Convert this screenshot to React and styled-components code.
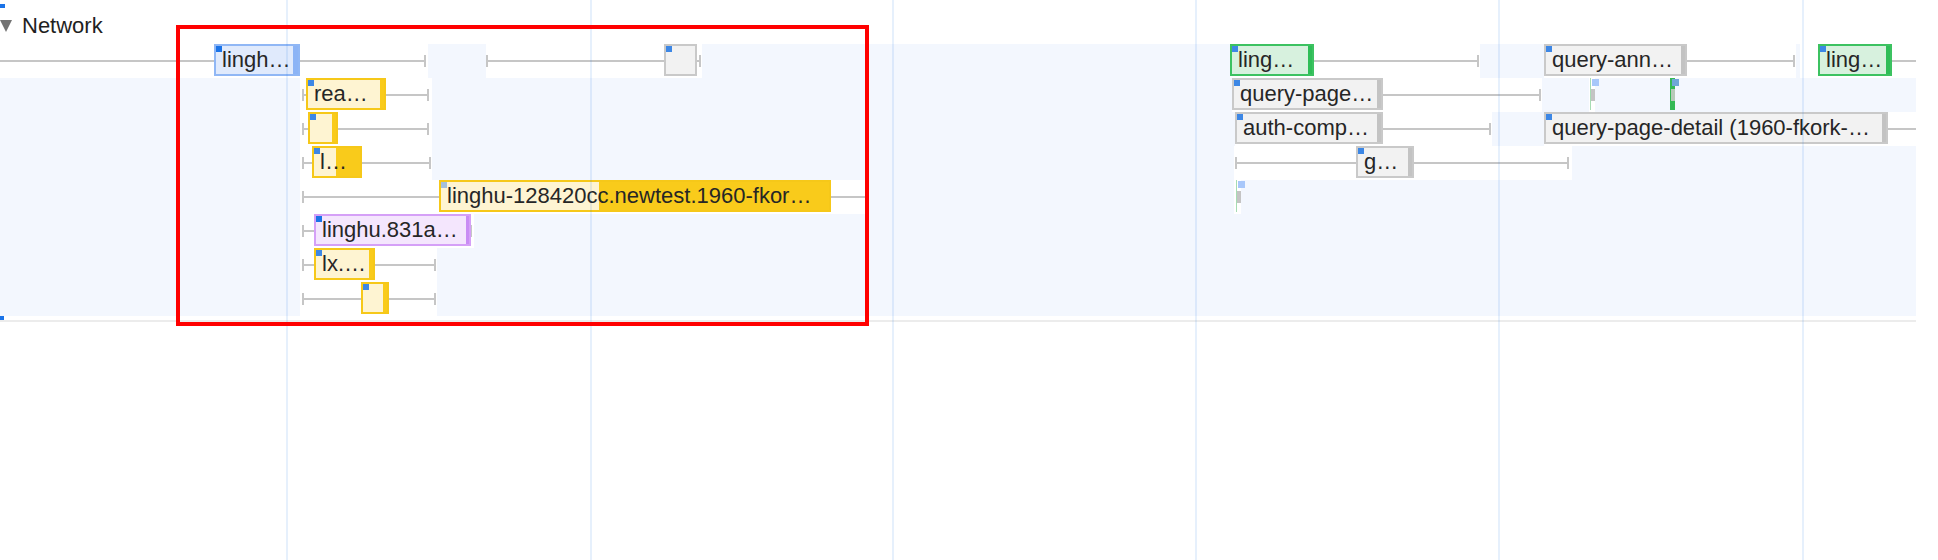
import React from 'react';
import styled, { createGlobalStyle } from 'styled-components';

const GlobalStyle = createGlobalStyle`
  html, body {
    margin: 0;
    padding: 0;
    background: #fff;
    overflow: hidden;
  }
`;

const Page = styled.div`
  position: relative;
  width: 1938px;
  height: 560px;
  overflow: hidden;
  background: #fff;
  font-family: "Liberation Sans", Arial, sans-serif;
`;

const Header = styled.div`
  height: 44px;
  box-sizing: border-box;
  padding-top: 4px;
`;

const PrevMarker = styled.div`
  width: 5px;
  height: 4px;
  background: #1a73e8;
`;

const TitleRow = styled.div`
  display: flex;
  align-items: center;
  gap: 10px;
  height: 26px;
  margin-top: 5px;
`;

const Caret = styled.span`
  width: 0;
  height: 0;
  border-left: 6.5px solid transparent;
  border-right: 6.5px solid transparent;
  border-top: 12px solid #737373;
`;

const Title = styled.span`
  font-size: 22px;
  line-height: 26px;
  color: #1f1f1f;
`;

const Track = styled.div`
  width: 1916px;
  background: #f3f7fe;
  display: flex;
  flex-direction: column;
`;

// one lane of the timeline: entries sit at their time offsets
const Lane = styled.div`
  position: relative;
  height: 34px;
`;

const Span = styled.div`
  position: absolute;
  top: 0;
  height: 34px;
  background: #fff;
`;

const Whisker = styled.div`
  position: absolute;
  top: 11px;
  height: 12px;
  box-sizing: border-box;
  border-left: ${p => (p.$capL ? '2px solid #c6c6c6' : 'none')};
  border-right: ${p => (p.$capR ? '2px solid #c6c6c6' : 'none')};

  &::before {
    content: '';
    position: absolute;
    left: 0;
    right: 0;
    top: 5px;
    height: 2px;
    background: #c6c6c6;
  }
`;

const kinds = {
  blue: { bg: '#e0eafc', border: '#90b7f5', solid: '#8cb4f6' },
  gray: { bg: '#f2f2f2', border: '#c9c9c9', solid: '#c3c3c3' },
  yellow: { bg: '#fef4d2', border: '#f6c819', solid: '#f9cb1b' },
  green: { bg: '#d7f1de', border: '#3cc261', solid: '#2fbd57' },
  purple: { bg: '#f4e6fd', border: '#d5a0f7', solid: '#c98cf4' },
};

const Bar = styled.div`
  position: absolute;
  top: 0;
  height: 32px;
  box-sizing: border-box;
  border: 2px solid ${p => kinds[p.$kind].border};
  background: linear-gradient(
    to left,
    ${p => kinds[p.$kind].solid} 0,
    ${p => kinds[p.$kind].solid} ${p => p.$solid}px,
    ${p => kinds[p.$kind].bg} ${p => p.$solid}px
  );
  padding: 0 4px 0 6px;
  font-size: 22px;
  line-height: 28px;
  color: #262626;
  white-space: nowrap;
  overflow: hidden;
`;

const Dot = styled.span`
  position: absolute;
  left: -1px;
  top: -1px;
  width: 7px;
  height: 7px;
  background: ${p => p.$color};
`;

const Tick = styled.div`
  position: absolute;
  top: 0;
  height: 32px;
  width: 5px;
  background: ${p => (p.$strong ? '#34b955' : '#fff')};
  border-left: 1px solid ${p => (p.$strong ? '#34b955' : '#a6dcb3')};
  box-sizing: border-box;

  &::before {
    content: '';
    position: absolute;
    left: 1px;
    top: 1px;
    width: 7px;
    height: 7px;
    background: ${p => (p.$strong ? '#6fa7d8' : '#a8c7fa')};
  }

  &::after {
    content: '';
    position: absolute;
    left: 0;
    top: 11px;
    width: 4px;
    height: 12px;
    background: ${p => (p.$strong ? '#b7c9b9' : '#c4c4c4')};
  }
`;

const Footer = styled.div`
  position: relative;
  width: 1916px;
  height: 4px;
  border-bottom: 2px solid #ececec;

  &::before {
    content: '';
    position: absolute;
    left: 0;
    top: 0;
    width: 4px;
    height: 4px;
    background: #1a73e8;
  }
`;

const Grid = styled.div`
  position: absolute;
  inset: 0;
  pointer-events: none;
`;

const GridLine = styled.div`
  position: absolute;
  top: 0;
  bottom: 0;
  width: 2px;
  background: rgba(26, 115, 232, 0.11);
`;

const Watermarks = styled.div`
  position: absolute;
  inset: 0;
  pointer-events: none;
`;

const Mark = styled.div`
  position: absolute;
  transform: rotate(-45deg);
  transform-origin: 0 0;
  font-size: 28px;
  line-height: 38px;
  white-space: pre;
  color: rgba(0, 0, 0, 0.022);
`;

const Highlight = styled.div`
  position: absolute;
  left: 176px;
  top: 25px;
  width: 693px;
  height: 301px;
  box-sizing: border-box;
  border: 4px solid #ff0000;
  pointer-events: none;
`;

const DOT = '#3d87e5';

const lanes = [
  {
    spans: [[0, 428], [486, 702], [1230, 1480], [1544, 1796], [1800, 1916]],
    whiskers: [
      { from: 0, to: 426, r: true },
      { from: 486, to: 701, l: true, r: true },
      { from: 1230, to: 1479, r: true },
      { from: 1544, to: 1795, r: true },
      { from: 1818, to: 1916 },
    ],
    bars: [
      { from: 214, to: 300, solid: 5, kind: 'blue', label: 'lingh…', dot: '#1a73e8' },
      { from: 664, to: 697, solid: 0, kind: 'gray', label: '', dot: DOT },
      { from: 1230, to: 1314, solid: 4, kind: 'green', label: 'ling…', dot: DOT },
      { from: 1544, to: 1687, solid: 4, kind: 'gray', label: 'query-ann…', dot: DOT },
      { from: 1818, to: 1892, solid: 4, kind: 'green', label: 'ling…', dot: DOT },
    ],
    ticks: [],
  },
  {
    spans: [[300, 432], [1232, 1542], [1589, 1595]],
    whiskers: [
      { from: 302, to: 429, l: true, r: true },
      { from: 1232, to: 1541, r: true },
    ],
    bars: [
      { from: 306, to: 386, solid: 4, kind: 'yellow', label: 'rea…', dot: DOT },
      { from: 1232, to: 1383, solid: 4, kind: 'gray', label: 'query-page…', dot: DOT },
    ],
    ticks: [{ x: 1590 }, { x: 1670, strong: true }],
  },
  {
    spans: [[300, 432], [1235, 1492], [1544, 1916]],
    whiskers: [
      { from: 302, to: 429, l: true, r: true },
      { from: 1235, to: 1491, r: true },
      { from: 1544, to: 1916 },
    ],
    bars: [
      { from: 308, to: 338, solid: 4, kind: 'yellow', label: '', dot: DOT },
      { from: 1235, to: 1383, solid: 4, kind: 'gray', label: 'auth-comp…', dot: DOT },
      { from: 1544, to: 1888, solid: 4, kind: 'gray', label: 'query-page-detail (1960-fkork-…', dot: DOT },
    ],
    ticks: [],
  },
  {
    spans: [[300, 432], [1234, 1572]],
    whiskers: [
      { from: 302, to: 431, l: true, r: true },
      { from: 1235, to: 1569, l: true, r: true },
    ],
    bars: [
      { from: 312, to: 362, solid: 24, kind: 'yellow', label: 'l…', dot: DOT },
      { from: 1356, to: 1414, solid: 4, kind: 'gray', label: 'g…', dot: DOT },
    ],
    ticks: [],
  },
  {
    spans: [[300, 866], [1234, 1241]],
    whiskers: [{ from: 302, to: 866, l: true }],
    bars: [
      {
        from: 439,
        to: 831,
        solid: 230,
        kind: 'yellow',
        label: 'linghu-128420cc.newtest.1960-fkor…',
        dot: '#a4bfda',
      },
    ],
    ticks: [{ x: 1236 }],
  },
  {
    spans: [[300, 474]],
    whiskers: [{ from: 302, to: 472, l: true, r: true }],
    bars: [{ from: 314, to: 471, solid: 3, kind: 'purple', label: 'linghu.831a…', dot: '#1a73e8' }],
    ticks: [],
  },
  {
    spans: [[300, 437]],
    whiskers: [{ from: 302, to: 436, l: true, r: true }],
    bars: [{ from: 314, to: 375, solid: 4, kind: 'yellow', label: 'lx.…', dot: DOT }],
    ticks: [],
  },
  {
    spans: [[300, 437]],
    whiskers: [{ from: 302, to: 436, l: true, r: true }],
    bars: [{ from: 361, to: 389, solid: 4, kind: 'yellow', label: '', dot: DOT }],
    ticks: [],
  },
];

const gridXs = [286, 590, 892, 1195, 1498, 1802];

const markText = 'DBB5667940D\n6D5D3A8A20\nD429E31C91\n8A';

const marks = [];
for (let r = -1; r <= 1; r++) {
  for (let c = -1; c <= 4; c++) {
    marks.push({ x: 74 + 535 * c + 256 * r - 20, y: 387 - 21 * c + 259 * r - 20 });
  }
}

const NetworkLane = ({ lane }) => (
  <Lane>
    {lane.spans.map(([a, b]) => (
      <Span key={`s${a}`} style={{ left: a, width: b - a }} />
    ))}
    {lane.whiskers.map(w => (
      <Whisker
        key={`w${w.from}`}
        $capL={w.l}
        $capR={w.r}
        style={{ left: w.from, width: w.to - w.from }}
      />
    ))}
    {lane.bars.map(b => (
      <Bar
        key={`b${b.from}`}
        $kind={b.kind}
        $solid={b.solid}
        style={{ left: b.from, width: b.to - b.from }}
      >
        <Dot $color={b.dot} />
        {b.label}
      </Bar>
    ))}
    {lane.ticks.map(t => (
      <Tick key={`t${t.x}`} $strong={t.strong} style={{ left: t.x }} />
    ))}
  </Lane>
);

const App = () => {
  return (
    <Page>
      <GlobalStyle />
      <Header>
        <PrevMarker />
        <TitleRow>
          <Caret />
          <Title>Network</Title>
        </TitleRow>
      </Header>

      <Track>
        {lanes.map((lane, i) => (
          <NetworkLane key={i} lane={lane} />
        ))}
      </Track>
      <Footer />

      <Grid>
        {gridXs.map(x => (
          <GridLine key={x} style={{ left: x }} />
        ))}
      </Grid>

      <Watermarks>
        {marks.map((m, i) => (
          <Mark key={i} style={{ left: m.x, top: m.y }}>
            {markText}
          </Mark>
        ))}
      </Watermarks>

      <Highlight />
    </Page>
  );
};

export default App;
